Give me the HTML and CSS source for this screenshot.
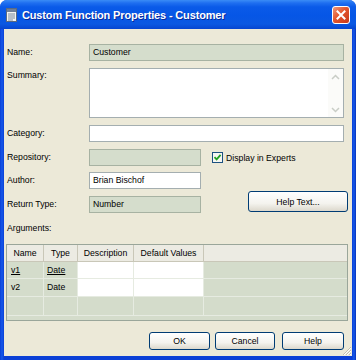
FILE: index.html
```html
<!DOCTYPE html>
<html>
<head>
<meta charset="utf-8">
<link rel="stylesheet" href="styles.css">
</head>
<body>
<div class="window">
  <div class="titlebar">
    <svg class="app-icon" width="13" height="14" viewBox="0 0 13 14">
      <rect x="1.5" y="0.5" width="10" height="13" fill="#f4f4f0" stroke="#5a6a80"/>
      <rect x="2" y="1" width="9" height="3" fill="#6f7f98"/>
      <line x1="3" y1="6" x2="10" y2="6" stroke="#7a8aa0"/>
      <line x1="3" y1="8" x2="10" y2="8" stroke="#7a8aa0"/>
      <line x1="3" y1="10" x2="10" y2="10" stroke="#7a8aa0"/>
      <line x1="3" y1="12" x2="8" y2="12" stroke="#7a8aa0"/>
    </svg>
    <span class="title">Custom Function Properties - Customer</span>
    <div class="close">
      <svg width="10" height="10" viewBox="0 0 10 10"><path d="M1.5 1.5 L8.5 8.5 M8.5 1.5 L1.5 8.5" stroke="#fff" stroke-width="2" stroke-linecap="square"/></svg>
    </div>
  </div>
  <div class="client">
    <div class="form">
      <div class="row">
        <span class="label">Name:</span>
        <div class="field ro wide">Customer</div>
      </div>
      <div class="row summary">
        <span class="label top">Summary:</span>
        <div class="field area wide">
          <div class="area-text"></div>
          <div class="vscroll">
            <svg width="9" height="6" viewBox="0 0 9 6"><path d="M1 5 L4.5 1.5 L8 5" fill="none" stroke="#c9cdc6" stroke-width="1.5"/></svg>
            <svg width="9" height="6" viewBox="0 0 9 6"><path d="M1 1 L4.5 4.5 L8 1" fill="none" stroke="#c9cdc6" stroke-width="1.5"/></svg>
          </div>
        </div>
      </div>
      <div class="row">
        <span class="label">Category:</span>
        <div class="field wide"></div>
      </div>
      <div class="row">
        <span class="label">Repository:</span>
        <div class="field ro short"></div>
        <div class="check">
          <span class="box">
            <svg width="9" height="9" viewBox="0 0 9 9"><path d="M1.5 4.2 L3.6 6.4 L7.6 1.8" fill="none" stroke="#21a121" stroke-width="1.8"/></svg>
          </span>
          <span>Display in Experts</span>
        </div>
      </div>
      <div class="row author">
        <span class="label">Author:</span>
        <div class="field short">Brian Bischof</div>
      </div>
      <div class="row">
        <span class="label">Return Type:</span>
        <div class="field ro short">Number</div>
        <button class="btn help-text">Help Text...</button>
      </div>
    </div>
    <div class="args-label">Arguments:</div>
    <div class="grid">
      <div class="grid-row head">
        <div class="c c1">Name</div>
        <div class="c c2">Type</div>
        <div class="c c3">Description</div>
        <div class="c c4">Default Values</div>
        <div class="c c5"></div>
      </div>
      <div class="grid-row data r1">
        <div class="c c1"><u>v1</u></div>
        <div class="c c2"><u>Date</u></div>
        <div class="c c3 white"></div>
        <div class="c c4 white"></div>
        <div class="c c5"></div>
      </div>
      <div class="grid-row data r2">
        <div class="c c1">v2</div>
        <div class="c c2">Date</div>
        <div class="c c3 white"></div>
        <div class="c c4 white"></div>
        <div class="c c5"></div>
      </div>
      <div class="grid-row data r3">
        <div class="c c1"></div>
        <div class="c c2"></div>
        <div class="c c3"></div>
        <div class="c c4"></div>
        <div class="c c5"></div>
      </div>
    </div>
    <div class="buttons">
      <button class="btn ok">OK</button>
      <button class="btn cancel">Cancel</button>
      <button class="btn help">Help</button>
    </div>
    <svg class="grip" width="11" height="11" viewBox="0 0 11 11">
      <path d="M10 2 L2 10 M10 5 L5 10 M10 8 L8 10" stroke="#c2bfae" stroke-width="1"/>
      <path d="M10 3 L3 10 M10 6 L6 10 M10 9 L9 10" stroke="#fff" stroke-width="1"/>
    </svg>
  </div>
</div>
</body>
</html>
```

FILE: styles.css
```css
* { box-sizing: border-box; }
html, body { margin: 0; padding: 0; background: #fff; }
body {
  font-family: "Liberation Sans", Arial, sans-serif;
  font-size: 8.7px;
  color: #000;
}
.window {
  width: 356px;
  height: 360px;
  display: flex;
  flex-direction: column;
  background: linear-gradient(90deg, #0a3fd6 0, #1558ea 2px, #0a3fd6 4px, #0a3fd6 352px, #1558ea 354px, #0832b8 356px);
  border-radius: 7px 7px 0 0;
  overflow: hidden;
}
.titlebar {
  height: 29px;
  flex: none;
  display: flex;
  align-items: center;
  padding: 0 5px 0 5px;
  background: linear-gradient(#3a8cf6 0, #1f6ff0 3px, #0a5ae8 7px, #0656e6 16px, #0a58e2 24px, #0645d0 29px);
}
.app-icon { flex: none; margin-top: 1px; }
.title {
  margin-left: 4px;
  color: #fff;
  font-weight: bold;
  font-size: 11px;
  letter-spacing: -0.15px;
  text-shadow: 1px 1px 0 #0a2a9a;
  flex: 1;
}
.close {
  width: 18px;
  height: 18px;
  border: 1px solid #fff;
  border-radius: 3px;
  background: linear-gradient(135deg, #f09a7c 0, #e2552d 45%, #c8381a 100%);
  display: flex;
  align-items: center;
  justify-content: center;
  margin-right: 1px;
}
.client {
  position: relative;
  flex: 1;
  margin: 0 4px 4px 4px;
  background: #ece9d8;
  padding: 15px 4px 0 3px;
}
.form {
  display: flex;
  flex-direction: column;
  gap: 7px;
}
.row {
  display: flex;
  align-items: center;
  height: 17px;
}
.row.summary { height: 50px; align-items: flex-start; }
.row.author { margin-top: -1px; }
.label {
  width: 82px;
  flex: none;
  line-height: 11px;
}
.label.top { padding-top: 2px; }
.field {
  height: 17px;
  border: 1px solid #a4aeb0;
  background: #fff;
  padding-left: 3px;
  line-height: 15px;
  flex: none;
}
.field.ro {
  background: #d5ddcc;
  border-color: #a7b2a2;
}
.wide { width: 255px; }
.short { width: 112px; }
.field.area {
  height: 50px;
  display: flex;
  padding: 0;
}
.area-text { flex: 1; }
.vscroll {
  width: 15px;
  display: flex;
  flex-direction: column;
  justify-content: space-between;
  align-items: center;
  padding: 5px 0 4px;
  background: #fbfbf9;
}
.check {
  display: flex;
  align-items: center;
  margin-left: 11px;
}
.box {
  width: 11px;
  height: 11px;
  border: 1px solid #1c5180;
  background: #f6f6f2;
  display: flex;
  align-items: center;
  justify-content: center;
  margin-right: 3px;
}
.btn {
  font-family: "Liberation Sans", Arial, sans-serif;
  font-size: 8.7px;
  color: #000;
  border: 1px solid #003c74;
  border-radius: 3px;
  background: linear-gradient(#ffffff 0, #f4f3ee 60%, #dcd8cc 100%);
  padding: 0;
  height: 18px;
  line-height: 16px;
}
.help-text {
  width: 100px;
  height: 21px;
  margin-left: 47px;
  align-self: flex-start;
  margin-top: -5px;
}
.args-label {
  margin-top: 10px;
  line-height: 11px;
  height: 11px;
}
.grid {
  margin-top: 10px;
  margin-left: -1px;
  width: 342px;
  height: 77px;
  border: 1px solid #9aa69a;
  background: #d4dccb;
}
.grid-row {
  display: flex;
}
.grid-row .c {
  flex: none;
  border-right: 1px solid #e6ebe1;
  border-bottom: 1px solid #e6ebe1;
}
.c1 { width: 37px; }
.c2 { width: 34px; }
.c3 { width: 56px; }
.c4 { width: 70px; }
.c5 { flex: 1 !important; border-right: none !important; }
.head { height: 17px; background: #ecebe3; }
.head .c {
  text-align: center;
  line-height: 16px;
  border-right: 1px solid #c9c7b8;
  border-bottom: 1px solid #c9c7b8;
}
.head .c5 { background: #ecebe3; }
.data .c { line-height: 16px; padding-left: 3px; }
.data .c1 { padding-left: 4px; }
.r1 { height: 17px; }
.r2 { height: 18px; }
.r3 { height: 19px; }
.data .c.white { background: #fff; }
.buttons {
  display: flex;
  justify-content: flex-end;
  margin-top: 11px;
  margin-right: 4px;
  gap: 5px;
}
.ok { width: 61px; }
.cancel { width: 60px; }
.help { width: 62px; margin-left: 2px; }
.grip {
  position: absolute;
  right: 0;
  bottom: 0;
}
```
